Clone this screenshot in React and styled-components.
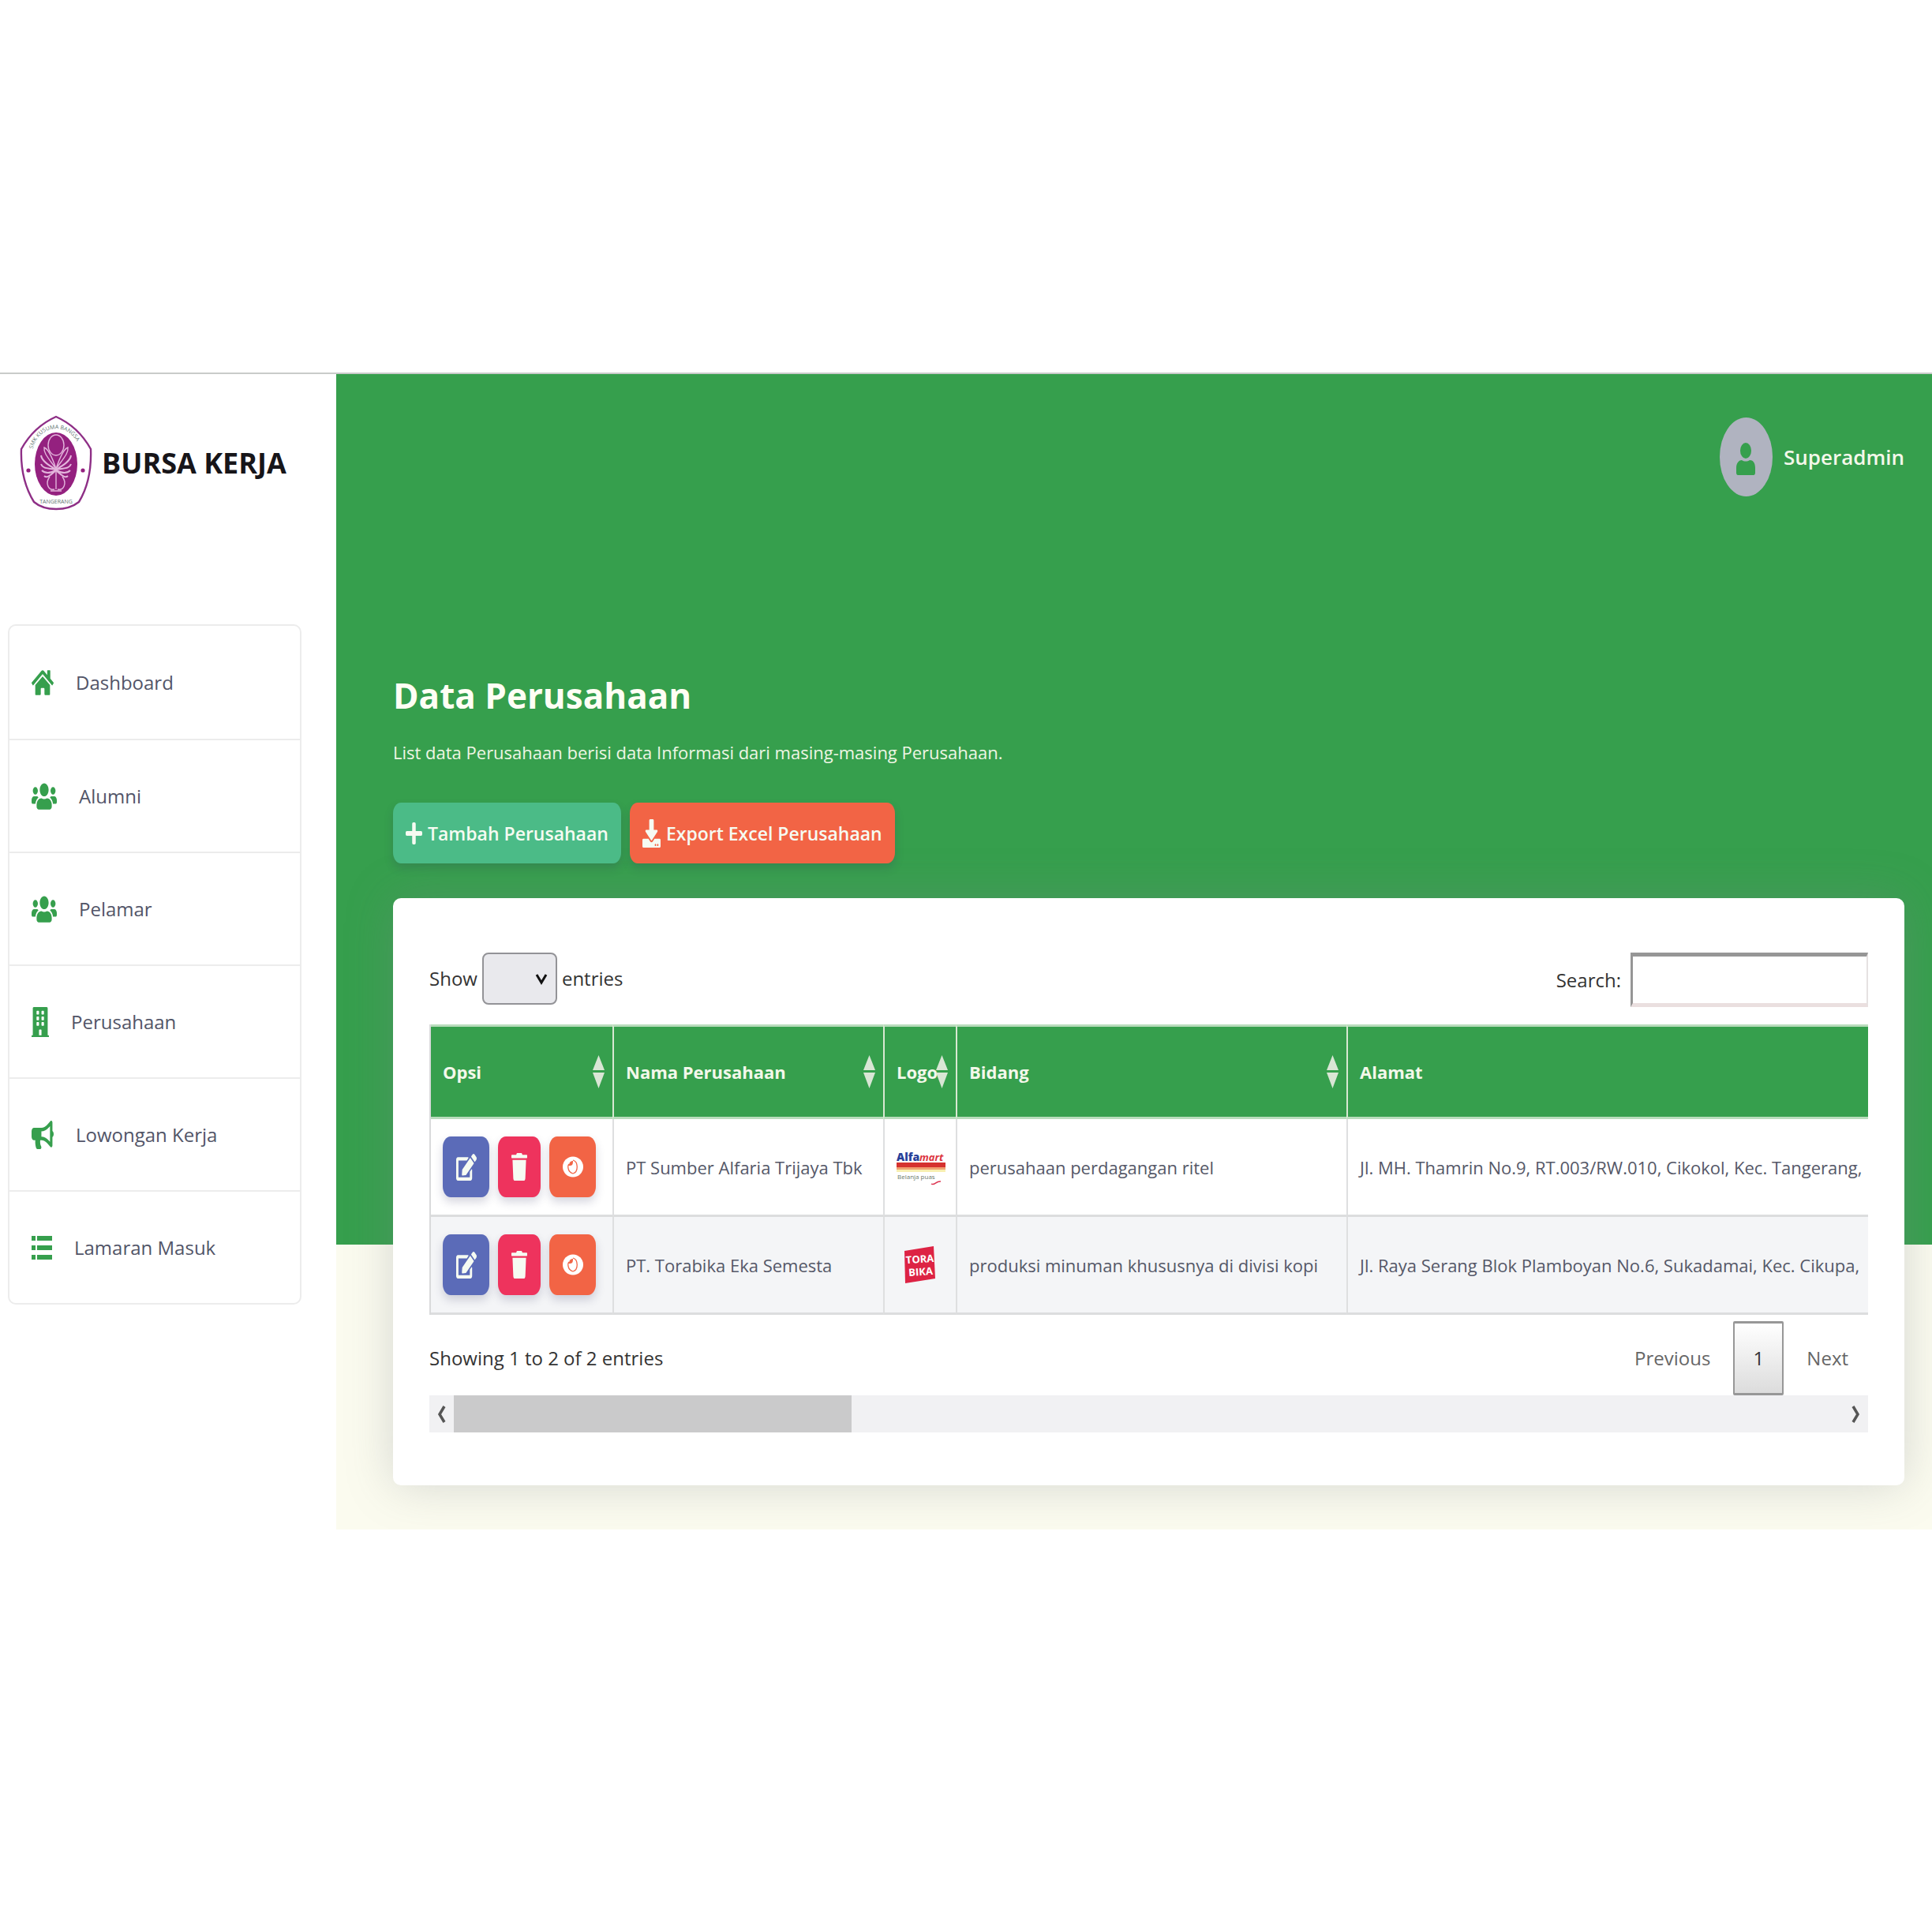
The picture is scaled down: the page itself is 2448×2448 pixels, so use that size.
import React from "react";
import styled, { createGlobalStyle } from "styled-components";
import {
  FaHome, FaUsers, FaBuilding, FaBullhorn,
  FaPlus, FaDownload, FaEdit, FaTrash,
} from "react-icons/fa";

const green = "#369f4d";
const orange = "#f26445";

const Global = createGlobalStyle`
  *, *::before, *::after { box-sizing: border-box; }
  body {
    margin: 0;
    background: #fff;
    color: #333;
    font-family: "Open Sans", "Noto Sans", sans-serif;
    font-size: 24px;
    line-height: 32px;
  }
  h1, h2, p { margin: 0; }
  a { color: inherit; text-decoration: none; }
  svg { display: block; flex: none; }
`;

const Page = styled.div`
  padding-top: 472px;
`;

const Frame = styled.div`
  display: flex;
  border-top: 2px solid #c9cbca;
`;

const Sidebar = styled.aside`
  flex: 0 0 426px;
  padding: 52px 44px 0 10px;
`;

const Brand = styled.div`
  display: flex;
  align-items: center;
  gap: 12px;
  margin-bottom: 143px;
  padding-left: 15px;
`;

const BrandName = styled.h2`
  color: #171519;
  font-size: 36px;
  line-height: 48px;
  font-weight: 700;
  white-space: nowrap;
`;

const Menu = styled.nav`
  border: 2px solid #ececec;
  border-radius: 10px;
`;

const MenuItem = styled.a`
  display: flex;
  align-items: center;
  gap: 28px;
  height: 143px;
  padding-left: 28px;
  color: #525568;
  svg { color: ${green}; }
  & + & { border-top: 2px solid #ececec; }
`;

const Main = styled.main`
  flex: 1;
  min-width: 0;
  overflow: hidden;
  padding: 55px 35px 56px 72px;
  background: linear-gradient(${green} 1103px, #fbfbef 1103px);
`;

const TopBar = styled.header`
  display: flex;
  justify-content: flex-end;
  margin-bottom: 222px;
`;

const Account = styled.a`
  display: flex;
  align-items: center;
  gap: 14px;
  color: #f4f8ea;
  font-size: 26px;
  font-weight: 600;
`;

const Title = styled.h1`
  color: #fffef4;
  font-size: 44px;
  line-height: 60px;
  font-weight: 700;
  margin-bottom: 26px;
`;

const Lead = styled.p`
  color: #eef6e4;
  font-size: 22px;
  margin-bottom: 48px;
`;

const Actions = styled.div`
  display: flex;
  gap: 11px;
  margin-bottom: 44px;
`;

const Button = styled.button`
  display: flex;
  align-items: center;
  justify-content: center;
  gap: 7px;
  height: 77px;
  padding: 0 16px;
  border: 0;
  border-radius: 10px / 14px;
  background: ${(p) => p.$color};
  box-shadow: 0 6px 12px rgba(50, 50, 93, 0.2);
  color: #f6fbf2;
  font: 600 23px/32px "Open Sans", "Noto Sans", sans-serif;
`;

const Card = styled.section`
  padding: 69px 46px 67px;
  border-radius: 10px;
  background: #fff;
  box-shadow: 0 0 60px rgba(126, 132, 140, 0.3);
`;

const Controls = styled.div`
  display: flex;
  justify-content: space-between;
  align-items: flex-start;
  margin-bottom: 22px;
`;

const Field = styled.label`
  display: flex;
  align-items: center;
  gap: ${(p) => p.$gap}px;
`;

const SelectBox = styled.span`
  position: relative;
  display: block;
  svg {
    position: absolute;
    right: 12px;
    top: 26px;
    pointer-events: none;
  }
`;

const Select = styled.select`
  display: block;
  appearance: none;
  width: 95px;
  height: 66px;
  border: 2px solid #939397;
  border-radius: 8px;
  background: #e9e9ed;
`;

const SearchInput = styled.input`
  width: 301px;
  height: 69px;
  border: solid;
  border-width: 5px 2px 5px 3px;
  border-color: #969696 #e6e2e2 #eadfdf #969696;
  background: #fff;
  padding: 0 10px;
  font: inherit;
`;

const TableWrap = styled.div`
  overflow: hidden;
`;

const Table = styled.table`
  width: 100%;
  table-layout: fixed;
  border-collapse: separate;
  border-spacing: 0;
  font-size: 22px;
  border-left: 2px solid #d9dadb;
`;

const Col = styled.col`
  width: ${(p) => p.$w}px;
`;

const Th = styled.th`
  height: 120px;
  padding: 0 10px 0 15px;
  border-top: 3px solid #b9dcbc;
  border-bottom: 3px solid #b9dcbc;
  background: ${green};
  color: #f3f8ea;
  font-weight: 700;
  text-align: left;
  & + & { border-left: 2px solid #d8e8d2; }
`;

const HeadLabel = styled.span`
  display: flex;
  align-items: center;
  justify-content: space-between;
  svg { margin-left: -8px; }
`;

const Row = styled.tr`
  &:nth-child(even) { background: #f4f5f7; }
`;

const Td = styled.td`
  height: 124px;
  padding: 0 0 0 15px;
  border-bottom: 3px solid #dcddde;
  color: #555868;
  white-space: nowrap;
  overflow: hidden;
  & + & { border-left: 2px solid #dedfe0; }
`;

const RowActions = styled.div`
  display: flex;
  gap: 11px;
`;

const RowButton = styled(Button)`
  width: ${(p) => p.$w}px;
  padding: 0;
`;

const Footer = styled.div`
  display: flex;
  justify-content: space-between;
  align-items: center;
  padding-top: 8px;
`;

const Pager = styled.nav`
  display: flex;
  align-items: center;
  gap: 29px;
  padding-right: 25px;
`;

const PageLink = styled.button`
  padding: 0;
  border: 0;
  background: none;
  color: #666;
  font: inherit;
`;

const CurrentPage = styled(PageLink)`
  width: 64px;
  height: 94px;
  border: 2px solid #979797;
  border-width: 3px 2px;
  border-radius: 2px;
  background: linear-gradient(#fff, #dcdcdc);
  color: #333;
`;

const ScrollTrack = styled.div`
  display: grid;
  grid-template-columns: 31px 1fr 31px;
  align-items: center;
  justify-items: center;
  height: 47px;
  background: #f1f1f3;
`;

const ScrollThumb = styled.div`
  justify-self: start;
  width: 504px;
  height: 47px;
  background: #cacacb;
`;

const Stretch = ({ icon: Icon, w, h }) => (
  <Icon width={w} height={h} preserveAspectRatio="none" style={{ width: w, height: h }} aria-hidden="true" />
);

const ListIcon = () => (
  <svg width="26" height="30" viewBox="0 0 26 30" aria-hidden="true">
    <path d="M0 0H5V6H0ZM7 0H26V6H7ZM0 12H5V18H0ZM7 12H26V18H7ZM0 24H5V30H0ZM7 24H26V30H7Z" fill="currentColor" />
  </svg>
);

const menu = [
  { label: "Dashboard", icon: <Stretch icon={FaHome} w={28} h={36} /> },
  { label: "Alumni", icon: <Stretch icon={FaUsers} w={32} h={38} /> },
  { label: "Pelamar", icon: <Stretch icon={FaUsers} w={32} h={38} /> },
  { label: "Perusahaan", icon: <Stretch icon={FaBuilding} w={22} h={38} /> },
  { label: "Lowongan Kerja", icon: <Stretch icon={FaBullhorn} w={28} h={36} /> },
  { label: "Lamaran Masuk", icon: <ListIcon /> },
];

const Crest = () => (
  <svg width="92" height="122" viewBox="0 0 92 122" role="img" aria-label="SMK Kusuma Bangsa">
    <path d="M46 2C64 10 80 25 90 43C91 70 86 92 75 110C60 122 32 122 18 110C7 92 1 70 2 43C12 25 28 10 46 2Z" fill="#fff" stroke="#8e2f86" strokeWidth="2.4" />
    <ellipse cx="46" cy="62" rx="27" ry="40" fill="#94217f" />
    <g fill="none" stroke="#e3b5dc" strokeWidth="1.4">
      <ellipse cx="46" cy="38" rx="10" ry="13" />
      <path d="M46 68C36 54 30 48 31 41C37 43 42 56 46 68C50 56 55 43 61 41C62 48 56 54 46 68Z" />
      <path d="M46 69C36 63 28 58 27 51M46 69C36 67 29 68 27 62M46 70C38 74 32 74 28 70M46 70C37 78 34 80 31 77M46 69C56 63 64 58 65 51M46 69C56 67 63 68 65 62M46 70C54 74 60 74 64 70M46 70C55 78 58 80 61 77" strokeWidth="2" />
      <path d="M46 68V94M38 78C32 86 36 96 44 94M54 78C60 86 56 96 48 94M39 96H53" />
    </g>
    <circle cx="11" cy="70" r="2.6" fill="#94217f" />
    <circle cx="80" cy="70" r="2.6" fill="#94217f" />
    <path id="arcTop" d="M16 45C24 8 68 8 77 45" fill="none" />
    <text fontSize="7" fontFamily="Open Sans, sans-serif" fill="#5e7370">
      <textPath href="#arcTop" startOffset="2">SMK KUSUMA BANGSA</textPath>
    </text>
    <text x="46" y="112" textAnchor="middle" fontSize="7" fontFamily="Open Sans, sans-serif" fill="#5e7370">TANGERANG</text>
  </svg>
);

const Avatar = () => (
  <svg width="67" height="100" viewBox="0 0 67 100" aria-hidden="true">
    <ellipse cx="33.500" cy="50" rx="33.500" ry="50" fill="#b0b3c0" />
    <ellipse cx="33" cy="42" rx="7" ry="10" fill={green} />
    <path d="M21 70V64C21 57 25 54 28 54C31 56 35 56 38 54C42 54 45 57 45 64V70C45 72 44 73 43 73H23C22 73 21 72 21 70Z" fill={green} />
  </svg>
);

const SortIcon = () => (
  <svg width="15" height="42" viewBox="0 0 15 42" aria-hidden="true">
    <path d="M7.500 0L15 19H0ZM0 22H15L7.500 42Z" fill="#d9e6d5" />
  </svg>
);

const EyeIcon = () => (
  <svg width="26" height="27" viewBox="0 0 26 27" aria-hidden="true">
    <ellipse cx="13" cy="13.500" rx="13" ry="13" fill="#fff" />
    <path d="M13 5C20 7 20 20 13 22C6 20 6 12 8 10" fill="none" stroke={orange} strokeWidth="1.300" />
    <path d="M13 6C13 11 12 12 8 12C8 8 10 6 13 6Z" fill={orange} />
  </svg>
);

const Alfamart = () => (
  <svg width="62" height="50" viewBox="0 -5 62 50" role="img" aria-label="Alfamart">
    <text x="0" y="12" fontSize="14" fontWeight="800" fontFamily="Open Sans, sans-serif" fill="#27409a">Alfa</text>
    <text x="29" y="12" fontSize="13" fontWeight="700" fontStyle="italic" fontFamily="Open Sans, sans-serif" fill="#dc3440">mart</text>
    <rect y="14" width="62" height="6" fill="#d5322f" />
    <rect y="20" width="62" height="3" fill="#f0a070" />
    <rect y="23" width="62" height="3" fill="#f8eeb0" />
    <text x="1" y="35" fontSize="8" fontFamily="Open Sans, sans-serif" fill="#6c7a6c">Belanja puas</text>
    <path d="M44 41C48 44 50 37 56 38" fill="none" stroke="#dc3450" strokeWidth="1.500" />
  </svg>
);

const Torabika = () => (
  <svg width="62" height="50" viewBox="0 0 62 50" role="img" aria-label="Torabika">
    <path d="M10 7L47 1L49 42L11 48Z" fill="#dd2344" />
    <g fontSize="13" fontWeight="700" fontFamily="Open Sans, sans-serif" fill="#fff" textAnchor="middle" transform="rotate(-4 30 25)">
      <text x="30" y="22">TORA</text>
      <text x="30" y="38">BIKA</text>
    </g>
  </svg>
);

const Arrow = ({ d }) => (
  <svg width="11" height="24" viewBox="0 0 11 24" aria-hidden="true">
    <path d={d} fill="none" stroke="#555" strokeWidth="3.500" />
  </svg>
);

const columns = [
  { title: "Opsi", w: 230, sort: true },
  { title: "Nama Perusahaan", w: 343, sort: true },
  { title: "Logo", w: 92, sort: true },
  { title: "Bidang", w: 495, sort: true },
  { title: "Alamat" },
];

const companies = [
  { name: "PT Sumber Alfaria Trijaya Tbk", Logo: Alfamart, field: "perusahaan perdagangan ritel", address: "Jl. MH. Thamrin No.9, RT.003/RW.010, Cikokol, Kec. Tangerang," },
  { name: "PT. Torabika Eka Semesta", Logo: Torabika, field: "produksi minuman khususnya di divisi kopi", address: "Jl. Raya Serang Blok Plamboyan No.6, Sukadamai, Kec. Cikupa," },
];

export default function App() {
  return (
    <Page>
      <Global />
      <Frame>
        <Sidebar>
          <Brand>
            <Crest />
            <BrandName>BURSA KERJA</BrandName>
          </Brand>
          <Menu>
            {menu.map(({ label, icon }) => (
              <MenuItem href="#" key={label}>
                {icon}
                {label}
              </MenuItem>
            ))}
          </Menu>
        </Sidebar>
        <Main>
          <TopBar>
            <Account href="#">
              <Avatar />
              Superadmin
            </Account>
          </TopBar>
          <Title>Data Perusahaan</Title>
          <Lead>List data Perusahaan berisi data Informasi dari masing-masing Perusahaan.</Lead>
          <Actions>
            <Button type="button" $color="#4bbb87">
              <Stretch icon={FaPlus} w={21} h={32} />
              Tambah Perusahaan
            </Button>
            <Button type="button" $color={orange}>
              <Stretch icon={FaDownload} w={23} h={36} />
              Export Excel Perusahaan
            </Button>
          </Actions>
          <Card>
            <Controls>
              <Field $gap={6}>
                Show
                <SelectBox>
                  <Select defaultValue="">
                    <option value="" aria-label="Default" />
                  </Select>
                  <svg width="16" height="16" viewBox="0 0 16 16" aria-hidden="true">
                    <path d="M2 2L8 12L14 2" fill="none" stroke="#111" strokeWidth="3" />
                  </svg>
                </SelectBox>
                entries
              </Field>
              <Field $gap={12}>
                Search:
                <SearchInput type="search" />
              </Field>
            </Controls>
            <TableWrap>
              <Table>
                <colgroup>
                  {columns.map((c) => (c.w ? <Col key={c.title} $w={c.w} /> : <col key={c.title} />))}
                </colgroup>
                <thead>
                  <tr>
                    {columns.map((c) => (
                      <Th key={c.title} scope="col">
                        <HeadLabel>
                          {c.title}
                          {c.sort && <SortIcon />}
                        </HeadLabel>
                      </Th>
                    ))}
                  </tr>
                </thead>
                <tbody>
                  {companies.map(({ name, Logo, field, address }) => (
                    <Row key={name}>
                      <Td>
                        <RowActions>
                          <RowButton type="button" $w={59} $color="#5b6bb8" aria-label="Edit">
                            <Stretch icon={FaEdit} w={26} h={34} />
                          </RowButton>
                          <RowButton type="button" $w={54} $color="#ee335d" aria-label="Hapus">
                            <Stretch icon={FaTrash} w={20} h={35} />
                          </RowButton>
                          <RowButton type="button" $w={59} $color={orange} aria-label="Lihat">
                            <EyeIcon />
                          </RowButton>
                        </RowActions>
                      </Td>
                      <Td>{name}</Td>
                      <Td><Logo /></Td>
                      <Td>{field}</Td>
                      <Td>{address}</Td>
                    </Row>
                  ))}
                </tbody>
              </Table>
            </TableWrap>
            <Footer>
              <p>Showing 1 to 2 of 2 entries</p>
              <Pager>
                <PageLink type="button">Previous</PageLink>
                <CurrentPage type="button">1</CurrentPage>
                <PageLink type="button">Next</PageLink>
              </Pager>
            </Footer>
            <ScrollTrack>
              <Arrow d="M9 2L3 12L9 22" />
              <ScrollThumb />
              <Arrow d="M2 2L8 12L2 22" />
            </ScrollTrack>
          </Card>
        </Main>
      </Frame>
    </Page>
  );
}
